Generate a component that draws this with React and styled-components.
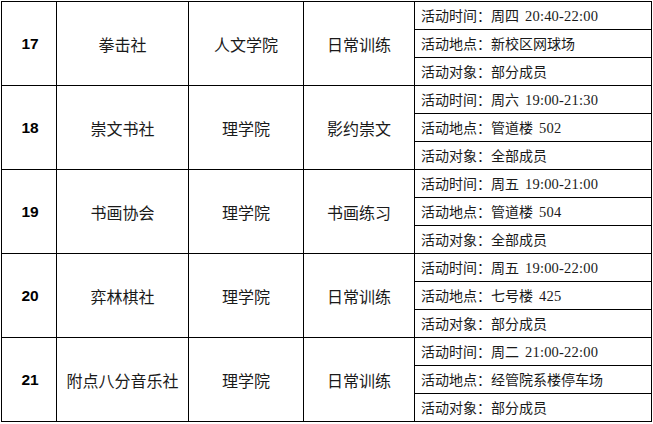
import React from "react";
import styled, { createGlobalStyle } from "styled-components";

const GlobalStyle = createGlobalStyle`
  html, body {
    margin: 0;
    padding: 0;
    background: #ffffff;
  }
  body {
    font-family: "Noto Sans CJK SC", "Liberation Sans", sans-serif;
    color: #111;
  }
`;

const clubs = [
  {
    no: "17",
    name: "拳击社",
    college: "人文学院",
    kind: "日常训练",
    time: ["周四", "20:40-22:00"],
    place: "新校区网球场",
    who: "部分成员",
  },
  {
    no: "18",
    name: "崇文书社",
    college: "理学院",
    kind: "影约崇文",
    time: ["周六", "19:00-21:30"],
    place: ["管道楼", "502"],
    who: "全部成员",
  },
  {
    no: "19",
    name: "书画协会",
    college: "理学院",
    kind: "书画练习",
    time: ["周五", "19:00-21:00"],
    place: ["管道楼", "504"],
    who: "全部成员",
  },
  {
    no: "20",
    name: "弈林棋社",
    college: "理学院",
    kind: "日常训练",
    time: ["周五", "19:00-22:00"],
    place: ["七号楼", "425"],
    who: "部分成员",
  },
  {
    no: "21",
    name: "附点八分音乐社",
    college: "理学院",
    kind: "日常训练",
    time: ["周二", "21:00-22:00"],
    place: "经管院系楼停车场",
    who: "部分成员",
  },
];

const Page = styled.div`
  padding: 1px 0 0 1px;
`;

const Table = styled.div`
  display: inline-flex;
  flex-direction: column;
  gap: 1px;
  padding: 1px;
  background: #000;
`;

const Group = styled.div`
  display: grid;
  grid-template-columns: 54px 131px 114px 110px 236px;
  grid-template-rows: repeat(3, 27px);
  gap: 1px;
`;

const Cell = styled.div`
  grid-row: 1 / span 3;
  background: #fff;
  display: flex;
  align-items: center;
  justify-content: center;
  font-size: 16px;
  color: #1a1a1a;
  white-space: nowrap;
`;

const NoCell = styled(Cell)`
  font-family: "Liberation Sans", Arial, sans-serif;
  font-weight: 700;
  font-size: 15.5px;
  color: #000;
  padding-left: 2px;
`;

const Detail = styled.div`
  grid-column: 5;
  background: #fff;
  padding-left: 6px;
  font-size: 14px;
  line-height: 27px;
  color: #1a1a1a;
  white-space: nowrap;
`;

const Latin = styled.span`
  font-family: "Liberation Serif", "Times New Roman", serif;
  font-size: 14.5px;
  letter-spacing: 0.2px;
  margin-left: ${(p) => (p.$gap ? "6px" : "0")};
`;

function Value({ v }) {
  if (Array.isArray(v)) {
    return (
      <>
        {v[0]}
        <Latin $gap>{v[1]}</Latin>
      </>
    );
  }
  return v;
}

export default function App() {
  return (
    <Page>
      <GlobalStyle />
      <Table>
        {clubs.map((c) => (
          <Group key={c.no}>
            <NoCell>{c.no}</NoCell>
            <Cell>{c.name}</Cell>
            <Cell>{c.college}</Cell>
            <Cell>{c.kind}</Cell>
            <Detail>
              活动时间：<Value v={c.time} />
            </Detail>
            <Detail>
              活动地点：<Value v={c.place} />
            </Detail>
            <Detail>
              活动对象：<Value v={c.who} />
            </Detail>
          </Group>
        ))}
      </Table>
    </Page>
  );
}
